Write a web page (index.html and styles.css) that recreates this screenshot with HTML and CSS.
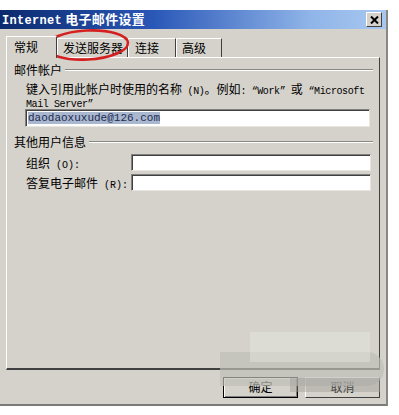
FILE: index.html
```html
<!DOCTYPE html>
<html>
<head>
<meta charset="utf-8">
<link rel="stylesheet" href="styles.css">
</head>
<body>
<div class="dialog">
  <div class="titlebar">
    <span class="title"><span class="lat">Internet</span> 电子邮件设置</span>
    <span class="close">
      <svg width="9" height="8" viewBox="0 0 9 8"><path d="M1 0.5 L8 7.5 M8 0.5 L1 7.5" stroke="#000" stroke-width="2"/></svg>
    </span>
  </div>
  <div class="content">
    <div class="tabs">
      <div class="tab active">常规</div>
      <div class="tab t2">发送服务器</div>
      <div class="tab t3">连接</div>
      <div class="tab t4">高级</div>
    </div>
    <div class="panel">
      <div class="group-head"><span>邮件帐户</span><i class="rule"></i></div>
      <div class="desc">
        <div class="line">键入引用此帐户时使用的名称<span class="lat"> (N)</span>。例如<span class="lat">: “Work” </span>或<span class="lat"> “Microsoft</span></div>
        <div class="line"><span class="lat">Mail Server”</span></div>
      </div>
      <div class="field wide"><span class="sel">daodaoxuxude@126.com</span></div>
      <div class="group-head second"><span>其他用户信息</span><i class="rule"></i></div>
      <div class="row"><span class="label">组织<span class="lat"> (O):</span></span><div class="field"></div></div>
      <div class="row"><span class="label">答复电子邮件<span class="lat"> (R):</span></span><div class="field"></div></div>
    </div>
    <div class="buttons">
      <div class="btn def">确定</div>
      <div class="btn">取消</div>
    </div>
  </div>
  <svg class="ring" width="90" height="36" viewBox="0 0 90 36"><ellipse cx="45" cy="18" rx="41" ry="14.5" fill="none" stroke="#d42020" stroke-width="2.6" transform="rotate(-3 45 18)"/></svg>
  <div class="wm">
    <div class="wm-a"></div>
    <div class="wm-b"></div>
    <div class="wm-c"></div>
  </div>
</div>
</body>
</html>
```
FILE: styles.css
```css
html, body { margin: 0; padding: 0; background: #fff; }
body {
  font-family: "Noto Sans CJK SC", "Liberation Sans", sans-serif;
  font-size: 12px;
  color: #000;
  width: 399px;
  height: 415px;
  overflow: hidden;
  white-space: nowrap;
}
.lat { font-family: "Liberation Mono", monospace; font-size: 10px; }
.dialog {
  position: relative;
  margin-top: 10px;
  width: 386px;
  height: 394px;
  background: #d5d2cb;
  border-right: 2px solid #8a8884;
  border-bottom: 2px solid #7c7a76;
}
.titlebar {
  height: 19px;
  display: flex;
  align-items: center;
  justify-content: space-between;
  padding: 0 4px 0 2px;
  background: linear-gradient(to right, #0b2a6e 0%, #2a58b8 40%, #8fb4e8 80%, #a8c8f0 100%);
}
.title {
  color: #fff;
  font-weight: bold;
  font-size: 13px;
  letter-spacing: 0.3px;
  line-height: 19px;
}
.title .lat { font-size: 12px; font-weight: bold; }
.close {
  width: 14px;
  height: 13px;
  background: #d5d2cb;
  border-top: 1px solid #fff;
  border-left: 1px solid #fff;
  border-right: 1px solid #404040;
  border-bottom: 1px solid #404040;
  display: flex;
  align-items: center;
  justify-content: center;
}
.content { padding: 6px 6px 0 6px; }
.tabs {
  display: flex;
  align-items: flex-end;
  height: 22px;
}
.tab {
  box-sizing: border-box;
  height: 19px;
  line-height: 18px;
  padding-left: 5px;
  border-top: 1px solid #fff;
  border-left: 1px solid #fff;
  border-right: 1px solid #404040;
  font-size: 12px;
}
.tab.active {
  width: 51px;
  height: 22px;
  line-height: 20px;
  padding-left: 7px;
  position: relative;
  z-index: 1;
  margin-bottom: -1px;
  background: #d5d2cb;
}
.t2 { width: 71px; }
.t3 { width: 48px; padding-left: 6px; }
.t4 { width: 46px; }
.panel {
  width: 374px;
  height: 313px;
  border-top: 1px solid #fff;
  border-left: 1px solid #fff;
  border-right: 1px solid #404040;
  border-bottom: 2px solid #404040;
  box-sizing: border-box;
  padding: 5px 6px 0 7px;
}
.group-head {
  display: flex;
  align-items: center;
  gap: 3px;
  height: 14px;
  line-height: 14px;
}
.group-head .rule {
  flex: 1;
  height: 0;
  border-top: 1px solid #8a8884;
  border-bottom: 1px solid #fff;
}
.desc {
  margin: 5px 0 0 12px;
}
.desc .line {
  height: 13px;
  line-height: 13px;
  overflow: visible;
}
.desc .lat { letter-spacing: -0.4px; line-height: 13px; }
.field {
  height: 17px;
  background: #fff;
  border-top: 1px solid #808080;
  border-left: 1px solid #808080;
  border-right: 1px solid #e8e6e0;
  border-bottom: 1px solid #e8e6e0;
  box-shadow: inset 1px 1px 0 #404040;
  box-sizing: border-box;
  width: 240px;
}
.field.wide {
  width: 345px;
  height: 18px;
  margin: 1px 0 0 11px;
  padding: 2px 0 0 2px;
  font-family: "Liberation Mono", monospace;
  font-size: 11px;
  line-height: 13px;
}
.sel { background: #a9b7cf; color: #1d2a52; }
.group-head.second { margin-top: 8px; }
.row {
  display: flex;
  align-items: center;
  height: 17px;
  margin-top: 5px;
  padding-left: 12px;
}
.row + .row { margin-top: 3px; }
.row .label { width: 105px; }
.buttons {
  display: flex;
  justify-content: flex-end;
  gap: 7px;
  margin-top: 7px;
}
.btn {
  width: 75px;
  height: 21px;
  box-sizing: border-box;
  text-align: center;
  line-height: 18px;
  font-size: 12px;
  border-top: 1px solid #fff;
  border-left: 1px solid #fff;
  border-right: 1px solid #404040;
  border-bottom: 1px solid #404040;
}
.btn.def { border: 1px solid #000; box-shadow: inset 1px 1px 0 #fff, inset -1px -1px 0 #808080; }
.ring { position: absolute; left: 42px; top: 17px; }
.wm { position: absolute; left: 220px; top: 322px; width: 170px; height: 70px; pointer-events: none; }
.wm-a { position: absolute; left: 0; top: 20px; width: 164px; height: 34px; background: rgba(190,189,183,0.7); border-radius: 0 17px 17px 0; }
.wm-b { position: absolute; left: 30px; top: 0; width: 120px; height: 30px; background: rgba(228,227,222,0.5); }
.wm-c { position: absolute; left: 70px; top: 46px; width: 90px; height: 14px; background: rgba(160,158,152,0.45); }
```
